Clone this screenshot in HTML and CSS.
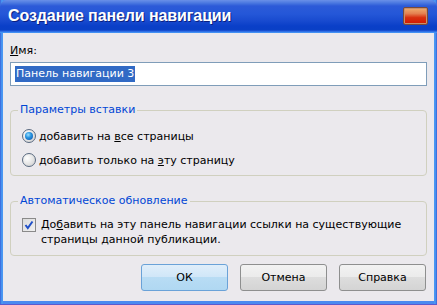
FILE: index.html
```html
<!DOCTYPE html>
<html>
<head>
<meta charset="UTF-8">
<title>Создание панели навигации</title>
<link rel="stylesheet" href="styles.css">
</head>
<body>
<div class="window">
	<div class="titlebar">
		<span class="title">Создание панели навигации</span>
		<span class="close-btn"></span>
	</div>
	<div class="client">
		<div class="label"><u>И</u>мя:</div>
		<div class="input"><span class="selected">Панель навигации 3</span></div>
		<fieldset class="group group-insert">
			<legend>Параметры вставки</legend>
			<div class="option">
				<span class="radio checked"></span>
				<span>добавить на <u>в</u>се страницы</span>
			</div>
			<div class="option">
				<span class="radio"></span>
				<span>добавить только на <u>э</u>ту страницу</span>
			</div>
		</fieldset>
		<fieldset class="group group-update">
			<legend>Автоматическое обновление</legend>
			<div class="option option-check">
				<span class="checkbox">
					<svg width="12" height="12" viewBox="0 0 12 12"><path d="M2.5 6 L4.8 9 L9.5 2.5" fill="none" stroke="#2150c8" stroke-width="2"/></svg>
				</span>
				<span>До<u>б</u>авить на эту панель навигации ссылки на существующие страницы данной публикации.</span>
			</div>
		</fieldset>
		<div class="buttons">
			<span class="btn btn-default">ОК</span>
			<span class="btn">Отмена</span>
			<span class="btn">Справка</span>
		</div>
	</div>
</div>
</body>
</html>
```

FILE: styles.css
```css
*{
	margin:0;
	padding:0;
	box-sizing:border-box;
}
body{
	width:437px;
	height:305px;
	overflow:hidden;
	font-family:"DejaVu Sans",sans-serif;
	font-size:11px;
	color:#000;
}
.window{
	width:437px;
	height:305px;
	padding:0 3px 3px 3px;
	background:linear-gradient(to right,#3a5fd8 0,#4aa3f6 2px,#4a8af0 3px,#4a8af0 434px,#4aa3f6 435px,#3a5fd8 437px);
	border-bottom:1px solid #5a5ad0;
	display:flex;
	flex-direction:column;
}
/* 标题栏 */
.titlebar{
	height:33px;
	margin:0 -3px;
	padding:0 9px 0 8px;
	display:flex;
	align-items:center;
	border-radius:7px 7px 0 0;
	background:linear-gradient(to bottom,#6a90e8 0,#4a78e0 3px,#2c5ad8 6px,#2457d8 14px,#1a4cd0 20px,#0a3fc8 26px,#0a40c6 30px,#3b7ef0 32px,#4aa3f6 33px);
}
.title{
	font-family:"Liberation Sans",sans-serif;
	font-weight:bold;
	font-size:16px;
	letter-spacing:-0.1px;
	color:#fff;
	text-shadow:1px 1px 0 #0a1f80;
	margin-top:-2px;
}
.close-btn{
	margin-left:auto;
	width:25px;
	height:18px;
	margin-top:-1px;
	border:1px solid #7a4a3a;
	box-shadow:inset 0 0 0 1px #c8906a;
	border-radius:2px;
	background:linear-gradient(to bottom,#f0b070 0,#e48050 35%,#d83010 60%,#d01800 100%);
}
/* 内容 */
.client{
	flex:1;
	background:#ebe9ed;
	padding:11px 7px 0 7px;
}
.label{
	line-height:14px;
	margin-bottom:4px;
}
.input{
	height:24px;
	border:1px solid #7f9db9;
	background:#fff;
	padding:3px 0 0 4px;
	line-height:16px;
}
.selected{
	display:inline-block;
	background:#316ac5;
	color:#fff;
	padding:0 1px;
}
.group{
	border:1px solid #d0d0bf;
	border-radius:4px;
	padding:0 8px;
}
.group legend{
	color:#0046d5;
	line-height:14px;
	padding:0 2px;
	margin-left:-1px;
}
.group-insert{
	margin-top:17px;
	padding-top:7px;
	padding-bottom:3px;
}
.group-update{
	margin-top:18px;
	padding-top:9px;
	padding-bottom:8px;
}
.option{
	height:24px;
	display:flex;
	align-items:center;
	gap:3px;
	padding-left:3px;
}
.option-check{
	height:auto;
	align-items:flex-start;
	line-height:15px;
	gap:5px;
}
.radio{
	width:14px;
	height:14px;
	border-radius:50%;
	border:1px solid #5a6a80;
	background:radial-gradient(circle at 35% 35%,#ffffff 0,#e6e6e6 50%,#c8c8c8 100%);
	flex:none;
	display:flex;
	align-items:center;
	justify-content:center;
}
.radio.checked:after{
	content:'';
	width:8px;
	height:8px;
	border-radius:50%;
	background:radial-gradient(circle at 40% 35%,#9ce0ff 0,#2a96e0 40%,#0a4aa8 100%);
}
.checkbox{
	width:14px;
	height:14px;
	margin-top:1px;
	border:1px solid #8a8a8a;
	background:linear-gradient(135deg,#dcdcdc 0,#f0f0f0 100%);
	flex:none;
	display:flex;
}
.checkbox svg{
	display:block;
}
/* 按钮 */
.buttons{
	margin-top:8px;
	display:flex;
	justify-content:flex-end;
	gap:12px;
	padding-right:1px;
}
.btn{
	width:87px;
	height:27px;
	display:flex;
	align-items:center;
	justify-content:center;
	font-weight:normal;
	border:1px solid #8e8f8f;
	border-radius:3px;
	background:linear-gradient(to bottom,#f2f2f2 0,#ebebeb 50%,#dddddd 50%,#d4d4d4 100%);
}
.btn-default{
	border-color:#6aa2d8;
	background:linear-gradient(to bottom,#e0eefa 0,#cfe6f8 50%,#b8dcf4 50%,#b0d8f2 100%);
}
```
